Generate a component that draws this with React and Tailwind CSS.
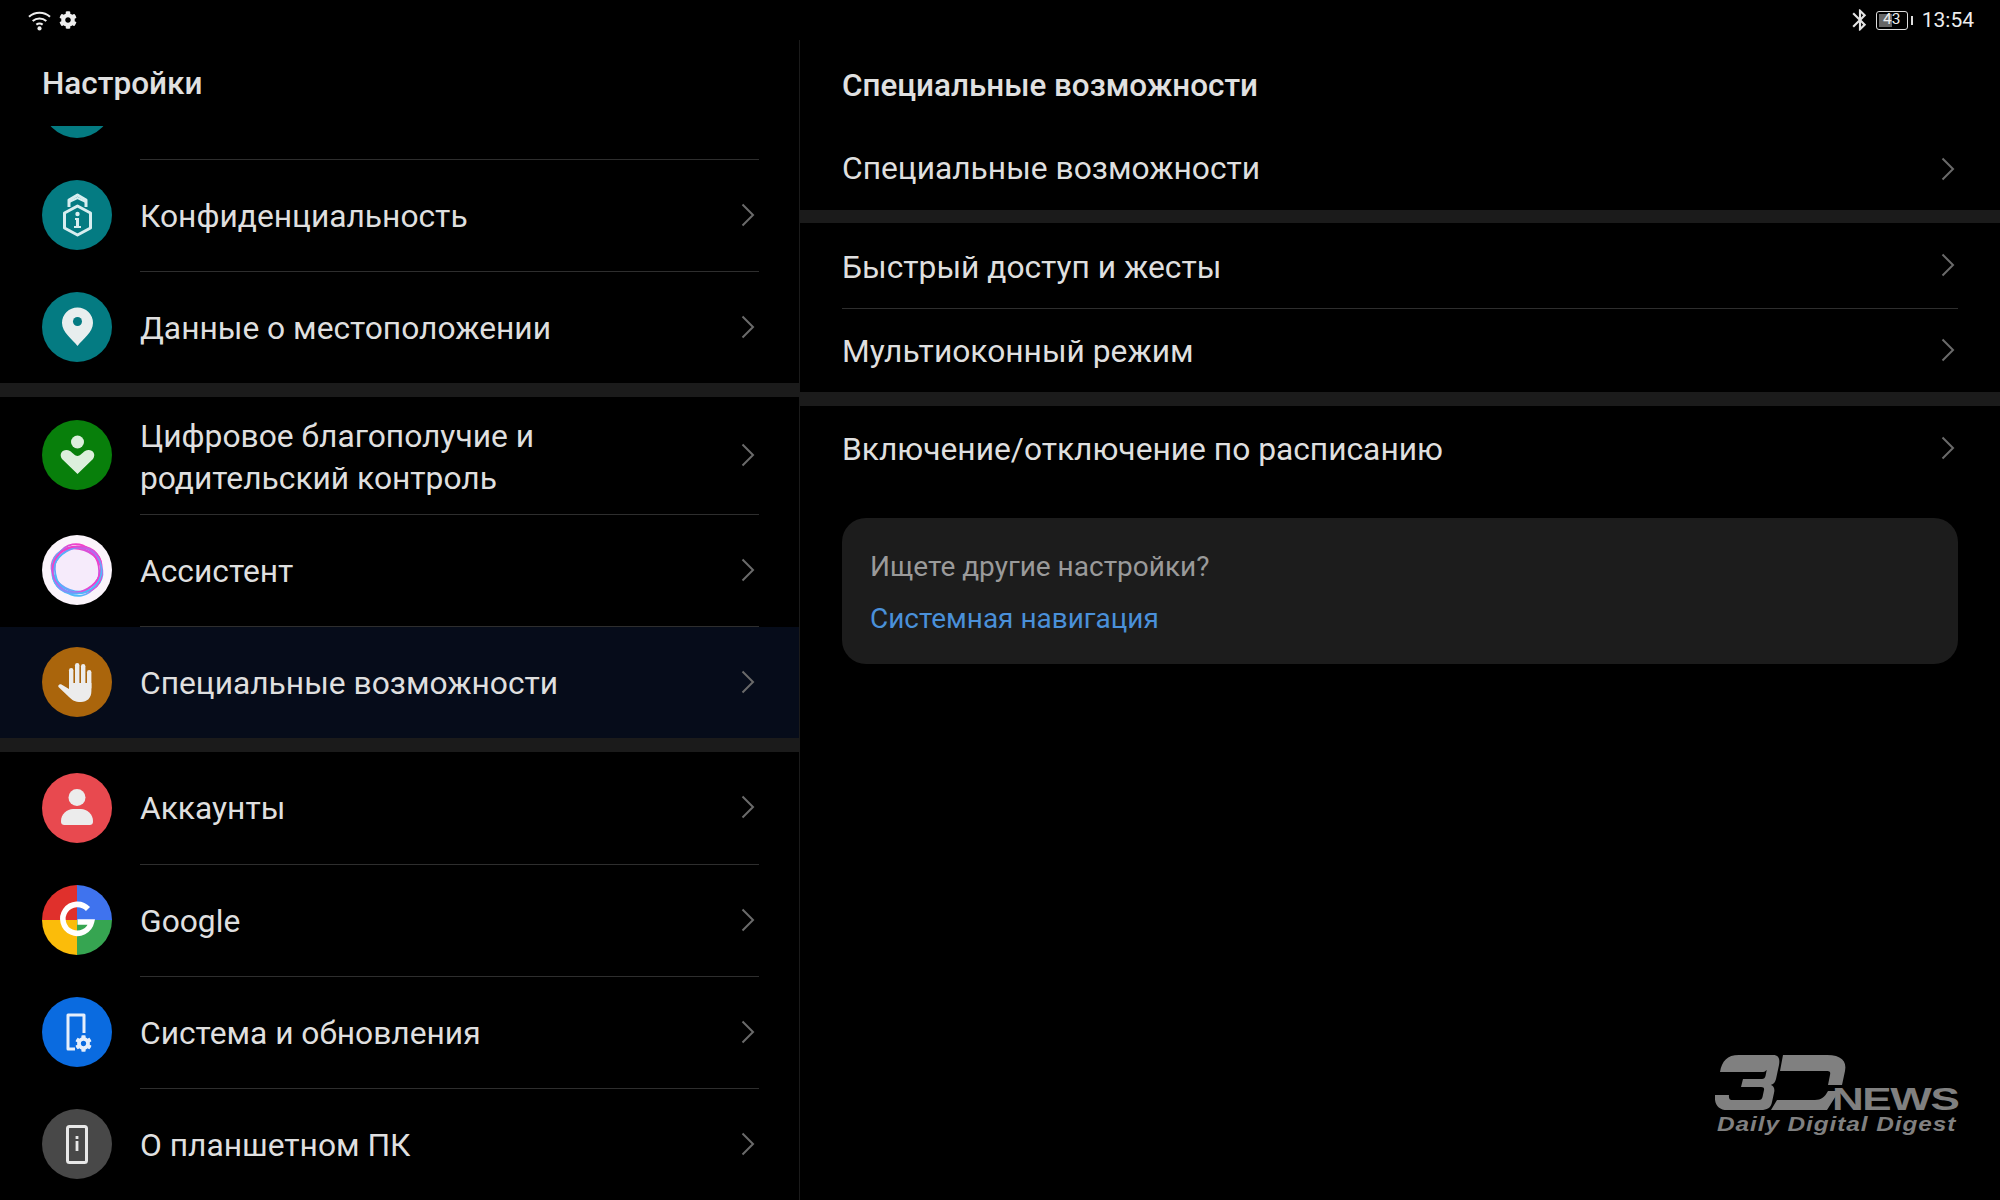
import React from "react";
import { FaCog } from "react-icons/fa";
import { MdBluetooth } from "react-icons/md";

function Chevron() {
  return (
    <svg width="14" height="24" viewBox="0 0 14 24" className="shrink-0">
      <polyline points="1.5,1.5 12,12 1.5,22.5" fill="none" stroke="#6a6a6a" strokeWidth="2" />
    </svg>
  );
}

function Circle({ bg, children }) {
  return (
    <div className={`w-[70px] h-[70px] rounded-full shrink-0 overflow-hidden ${bg}`}>
      <svg width="70" height="70" viewBox="0 0 70 70" className="block">{children}</svg>
    </div>
  );
}

const IconPrivacy = () => (
  <Circle bg="bg-[#047b82]">
    <g fill="none" stroke="#d7eef0" strokeWidth="3" strokeLinejoin="round">
      <path d="M27 27 V20 L35.5 15 L44 20 V27" />
      <path d="M27 22 L35.5 18 L44 22" strokeWidth="2" />
      <path d="M35.5 26 L48.5 33 V48 L35.5 55 L22.5 48 V33 Z" />
    </g>
    <circle cx="35.5" cy="34" r="2.2" fill="#d7eef0" />
    <path d="M33 38 H37 V46 H39 V48 H32 V46 H34 V40 H33 Z" fill="#d7eef0" />
  </Circle>
);
const IconPin = () => (
  <Circle bg="bg-[#047b82]">
    <path d="M35.5 54 C30 47 20 40 20 31 A15.5 15.5 0 0 1 51 31 C51 40 41 47 35.5 54 Z" fill="#e8eeee" />
    <circle cx="35.5" cy="29.5" r="4.5" fill="#047b82" />
  </Circle>
);
const IconWell = () => (
  <Circle bg="bg-[#087f0b]">
    <circle cx="35.5" cy="22" r="6.5" fill="#dcefdc" />
    <path d="M35.5 54 L20 39 C16 33 22 28 28 31 C31 33 33 36 35.5 36 C38 36 40 33 43 31 C49 28 55 33 51 39 Z" fill="#dcefdc" />
  </Circle>
);
const IconAssistant = () => (
  <Circle bg="bg-[#fbf4fb]">
    <defs>
      <linearGradient id="asg" gradientUnits="userSpaceOnUse" x1="18" y1="16" x2="54" y2="54">
        <stop offset="0.1" stopColor="#f020c0" />
        <stop offset="0.5" stopColor="#9a5cf4" />
        <stop offset="0.85" stopColor="#30b0fa" />
      </linearGradient>
    </defs>
    <circle cx="35" cy="35" r="24" fill="#f6ecfb" />
    <g fill="none" stroke="url(#asg)" strokeWidth="1.8" opacity="0.85">
      <ellipse cx="35" cy="35" rx="26" ry="21" transform="rotate(20 35 35)" />
      <ellipse cx="35" cy="35" rx="22" ry="25.5" transform="rotate(50 35 35)" />
      <ellipse cx="35" cy="35" rx="26" ry="22" transform="rotate(80 35 35)" />
      <ellipse cx="35" cy="35" rx="22" ry="25.5" transform="rotate(120 35 35)" />
      <ellipse cx="35" cy="35" rx="25.5" ry="21.5" transform="rotate(150 35 35)" />
      <ellipse cx="35" cy="35" rx="24.5" ry="23.5" />
    </g>
  </Circle>
);
const IconHand = () => (
  <Circle bg="bg-[#aa650c]">
    <g fill="#ececec">
      <rect x="27" y="21" width="4.4" height="22" rx="2.2" />
      <rect x="33" y="16" width="4.4" height="26" rx="2.2" />
      <rect x="39" y="17" width="4.4" height="26" rx="2.2" />
      <rect x="45" y="23" width="4.4" height="20" rx="2.2" />
      <path d="M27 36 H49.4 V44 C49.4 51 45 55 39 55 C33 55 30 53 27 50 L16.5 40 C15.5 38.5 17.5 36.5 19.5 37.5 L27 42 Z" />
    </g>
  </Circle>
);
const IconUser = () => (
  <Circle bg="bg-[#e8494f]">
    <circle cx="35" cy="24.5" r="8.5" fill="#ececec" />
    <path d="M19 48 C19 41 25 36 31 36 H39 C45 36 51 41 51 48 C51 51 50 52 47 52 H23 C20 52 19 51 19 48 Z" fill="#ececec" />
  </Circle>
);
const IconGoogle = () => (
  <Circle bg="bg-[#000]">
    <rect x="0" y="0" width="35" height="35" fill="#e0302c" />
    <rect x="35" y="0" width="35" height="35" fill="#3f73ee" />
    <rect x="0" y="35" width="35" height="35" fill="#fbbc0a" />
    <rect x="35" y="35" width="35" height="35" fill="#36a551" />
    <path d="M46 24 A14.5 14.5 0 1 0 49.5 37 H35.5" fill="none" stroke="#fff" strokeWidth="5.6" />
  </Circle>
);
const IconSystem = () => (
  <Circle bg="bg-[#0a6be0]">
    <path d="M42 36 V18 H26 V52 H33" fill="none" stroke="#e6effb" strokeWidth="3" strokeLinejoin="round" />
    <foreignObject x="33" y="38" width="18" height="18">
      <FaCog size={17} color="#e6effb" />
    </foreignObject>
  </Circle>
);
const IconAbout = () => (
  <Circle bg="bg-[#484848]">
    <rect x="25.5" y="17.5" width="19" height="36" rx="2" fill="none" stroke="#e8e8e8" strokeWidth="3" />
    <rect x="33.6" y="27" width="2.8" height="3" fill="#e8e8e8" />
    <rect x="33.6" y="32" width="2.8" height="10" fill="#e8e8e8" />
  </Circle>
);

function Row({ icon, h, sep = true, children, selected, textClass = "pt-[2px]" }) {
  return (
    <div className={`flex items-stretch pl-[42px] ${h} ${selected ? "bg-[#060c1a]" : ""}`}>
      <div className="flex items-center w-[98px] shrink-0 pb-[2px]">{icon}</div>
      <div className={`flex-1 mr-[40px] flex items-center justify-between pr-[4px] ${sep ? "border-b border-[#2e2e2e]" : ""}`}>
        <div className={`text-[31.76px] leading-[42px] text-[#dfdfdf] ${textClass}`}>{children}</div>
        <div className="pb-[2px]"><Chevron /></div>
      </div>
    </div>
  );
}

function RightRow({ h, sep, children, textClass = "pt-[2px]" }) {
  return (
    <div className={`mx-[42px] flex items-center justify-between pr-[3px] ${h} ${sep ? "border-b border-[#2e2e2e]" : ""}`}>
      <div className={`text-[31.76px] leading-[42px] text-[#dfdfdf] ${textClass}`}>{children}</div>
      <div className="pb-[2px]"><Chevron /></div>
    </div>
  );
}

const Band = () => <div className="h-[14px] bg-[#1b1b1b]" />;

function Logo() {
  return (
    <div className="absolute left-[1715px] top-[1055px] w-[244px] h-[80px] text-[#808080]">
      <svg width="134" height="56" viewBox="0 0 134 56" className="absolute left-0 top-0" fill="#808080">
        <path d="M5 17 C7 6 12 0 24 0 H58 C64 0 65 4 64 10 L61 24 C60 28 58 29 56 30 C59 31 60 34 59 38 L57 47 C56 53 52 55 46 55 H12 C4 55 -1 50 0 40 H14 C13.5 44 15 45 18 45 H44 C46 45 47 44 47.5 42 L49 35 C49.5 33 48.5 32 46 32 H26 L28 24 H47 C49 24 50 23 50.5 21 L51.5 16 C52 13 51 17 48 17 Z" />
        <path d="M68 0 H112 C126 0 132 6 130 16 L127 30 H113 L115 20 C116 16 114 16 110 16 H65 Z" />
        <path d="M62 45 H100 C106 45 110 42 113 36 L124 36 L112 55 H56 Z" />
      </svg>
      <div className="absolute left-[117px] top-[32px] text-[31px] leading-[26px] font-bold font-['Liberation_Sans',sans-serif] scale-x-[1.42] origin-left tracking-[-1px]">NEWS</div>
      <div className="absolute left-[2px] top-[60px] text-[21px] leading-[18px] font-bold italic font-['Liberation_Sans',sans-serif] tracking-[0.8px] whitespace-nowrap scale-x-[1.16] origin-left">Daily Digital Digest</div>
    </div>
  );
}

export default function App() {
  return (
    <div className="relative w-[2000px] h-[1200px] overflow-hidden bg-black font-['Roboto',sans-serif] text-[#dfdfdf]">
      <div className="h-[40px] flex items-center justify-between pl-[27px] pr-[26px]">
        <div className="flex items-center gap-[7px]">
          <svg width="25" height="21" viewBox="0 0 22 20">
            <g fill="none" stroke="#eee" strokeWidth="2">
              <path d="M1 6.5 A15 15 0 0 1 21 6.5" />
              <path d="M4.5 10.5 A10 10 0 0 1 17.5 10.5" />
              <path d="M8 14 A5 5 0 0 1 14 14" />
            </g>
            <circle cx="11" cy="17.5" r="2" fill="#eee" />
          </svg>
          <FaCog size={18} color="#eee" />
        </div>
        <div className="flex items-center">
          <MdBluetooth size={26} color="#e4e4e4" />
          <div className="ml-[3px] w-[32px] h-[19px] border-[1.5px] border-[#ddd] rounded-[3px] relative flex items-center justify-center">
            <div className="absolute left-[2px] top-[2px] bottom-[2px] w-[13px] bg-[#666]" />
            <span className="relative text-[15.5px] leading-none text-[#eee]">43</span>
          </div>
          <div className="ml-[3px] w-[2px] h-[9px] bg-[#ddd]" />
          <div className="ml-[9px] text-[21px] leading-none text-[#eee]">13:54</div>
        </div>
      </div>
      <div className="flex h-[1160px]">
        <div className="w-[800px] shrink-0 border-r border-[#1b1b1b] overflow-hidden">
          <div className="h-[86px] pl-[42px] pt-[26px] text-[31.5px] leading-[36px] font-medium text-[#e0e0e0]">Настройки</div>
          <div className="h-[34px] flex pl-[42px]">
            <div className="w-[98px] shrink-0 h-[34px] overflow-hidden">
              <div className="w-[70px] h-[70px] rounded-full bg-[#047b82] -mt-[58px]" />
            </div>
            <div className="flex-1 mr-[40px] border-b border-[#2e2e2e]" />
          </div>
          <Row icon={<IconPrivacy />} h="h-[112px]">Конфиденциальность</Row>
          <Row icon={<IconPin />} h="h-[111px]" sep={false}>Данные о местоположении</Row>
          <Band />
          <Row icon={<IconWell />} h="h-[118px]" textClass="pt-[4px]"><div>Цифровое благополучие и</div><div>родительский контроль</div></Row>
          <Row icon={<IconAssistant />} h="h-[112px]">Ассистент</Row>
          <Row icon={<IconHand />} h="h-[111px]" sep={false} selected>Специальные возможности</Row>
          <Band />
          <Row icon={<IconUser />} h="h-[113px]">Аккаунты</Row>
          <Row icon={<IconGoogle />} h="h-[112px]">Google</Row>
          <Row icon={<IconSystem />} h="h-[112px]">Система и обновления</Row>
          <Row icon={<IconAbout />} h="h-[112px]" sep={false}>О планшетном ПК</Row>
        </div>
        <div className="flex-1 min-w-0">
          <div className="h-[89px] pl-[42px] pt-[28px] text-[31.4px] leading-[36px] font-medium text-[#e0e0e0]">Специальные возможности</div>
          <RightRow h="h-[81px]" textClass="pb-[2px]">Специальные возможности</RightRow>
          <div className="h-[13px] bg-[#1b1b1b]" />
          <RightRow h="h-[86px]" sep textClass="pt-[4px]">Быстрый доступ и жесты</RightRow>
          <RightRow h="h-[83px]">Мультиоконный режим</RightRow>
          <Band />
          <RightRow h="h-[86px]">Включение/отключение по расписанию</RightRow>
          <div className="mx-[42px] mt-[26px] h-[146px] rounded-[24px] bg-[#1c1c1c] px-[28px] pt-[31px]">
            <div className="text-[28px] leading-[36px] text-[#9a9a9a]">Ищете другие настройки?</div>
            <div className="mt-[16px] text-[27.95px] leading-[36px] text-[#4a90d9]">Системная навигация</div>
          </div>
        </div>
      </div>
      <Logo />
    </div>
  );
}
